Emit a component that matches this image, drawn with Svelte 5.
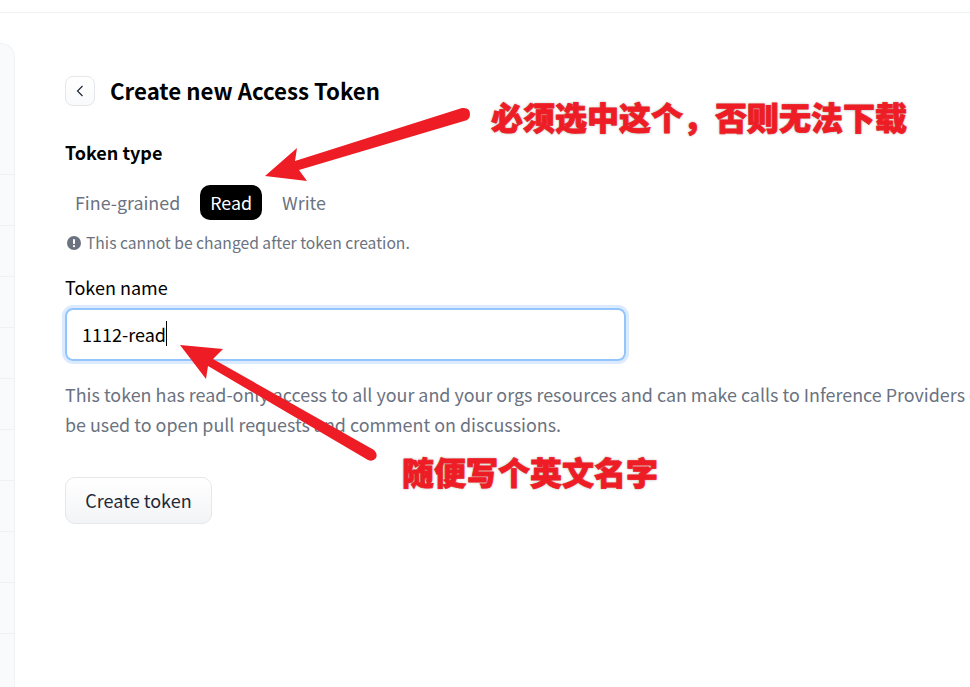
<script>
	let tokenTypes = ['Fine-grained', 'Read', 'Write'];
	let selected = 'Read';
	let rows = Array.from({ length: 10 });
</script>

<div class="page">
	<div class="topbar"></div>
	<div class="layout">
		<aside class="sidebar">
			<div class="sidebar-head"></div>
			{#each rows as _}
				<div class="sidebar-row"></div>
			{/each}
		</aside>
		<main class="main">
			<div class="title-row">
				<button class="back" aria-label="Back">
					<svg width="12" height="14" viewBox="0 0 12 14" fill="none">
						<path d="M8.5 2 3.5 7l5 5" stroke="#1f2937" stroke-width="1.2" />
					</svg>
				</button>
				<h1>Create new Access Token</h1>
			</div>

			<div class="label strong">Token type</div>
			<div class="tabs">
				{#each tokenTypes as t}
					<span class="tab" class:active={t === selected}>{t}</span>
				{/each}
			</div>
			<div class="note">
				<svg width="14" height="14" viewBox="0 0 14 14">
					<circle cx="7" cy="7" r="7" fill="#6b7280" />
					<rect x="6" y="3" width="2" height="5" rx="0.8" fill="#fff" />
					<circle cx="7" cy="10.2" r="1.1" fill="#fff" />
				</svg>
				<span>This cannot be changed after token creation.</span>
			</div>

			<div class="label">Token name</div>
			<div class="input">1112-read<span class="caret"></span></div>

			<p class="desc">This token has read-only access to all your and your orgs resources and can make calls to Inference Providers on your behalf. It cannot<br />be used to open pull requests and comment on discussions.</p>

			<button class="create">Create token</button>
		</main>
	</div>

	<svg class="arrows" width="970" height="687" viewBox="0 0 970 687">
		<path fill="#ee1c25" d="M265 176 297 148 295 161 462 108Q470 107 470 114 470 120 464 121L299 170 307 181Z" />
		<path fill="#ee1c25" d="M180 345 223 349 213 359 374 450Q378 454 376 458 373 462 368 460L208 366 206 379Z" />
	</svg>
	<div class="callout one">必须选中这个，否则无法下载</div>
	<div class="callout two">随便写个英文名字</div>
</div>

<style>
	:global(body) {
		margin: 0;
		background: #fff;
	}

	.page {
		position: relative;
		width: 970px;
		height: 687px;
		overflow: hidden;
		font-family: "Noto Sans CJK SC", "Noto Sans", sans-serif;
		background: #fff;
	}

	.topbar {
		height: 12px;
		border-bottom: 1px solid #f0f1f3;
	}

	.layout {
		display: flex;
	}

	/* sidebar is cut off at the left edge of the shot */
	.sidebar {
		width: 14px;
		height: 644px;
		margin-top: 30px;
		flex-shrink: 0;
		background: #f9fafb;
		border-right: 1px solid #f1f2f4;
		border-top: 1px solid #f1f2f4;
		border-top-right-radius: 14px;
	}

	.sidebar-head {
		height: 130px;
	}

	.sidebar-row {
		height: 50px;
		border-top: 1px solid #f0f1f3;
	}

	.main {
		padding: 63px 0 0 50px;
		flex: 1;
		min-width: 0;
	}

	.title-row {
		display: flex;
		align-items: center;
		gap: 15px;
		height: 30px;
	}

	.back {
		width: 30px;
		height: 30px;
		padding: 0;
		display: flex;
		align-items: center;
		justify-content: center;
		border: 1px solid #e5e7eb;
		border-radius: 8px;
		background: linear-gradient(#fff, #f9fafb);
	}

	h1 {
		margin: 0;
		padding-bottom: 2px;
		font-size: 22.25px;
		line-height: 28px;
		font-weight: 700;
		color: #000;
	}

	.label {
		font-size: 18px;
		line-height: 24px;
		color: #000;
		margin-top: 34px;
	}

	.label.strong {
		font-weight: 600;
	}

	.tabs {
		display: flex;
		gap: 0;
		margin-top: 21px;
	}

	.tab {
		padding: 0 10px;
		height: 35px;
		line-height: 35px;
		font-size: 17.85px;
		color: #6b7280;
		border-radius: 10px;
	}

	.tab.active {
		background: #000;
		color: #fff;
		margin: 0 10px;
	}

	.note {
		display: flex;
		align-items: center;
		gap: 5px;
		margin-top: 12px;
		margin-left: 2px;
		font-size: 15.65px;
		line-height: 22px;
		color: #6b7280;
	}

	.note + .label {
		margin-top: 21px;
	}

	.input {
		display: flex;
		align-items: center;
		box-sizing: border-box;
		width: 561px;
		height: 53px;
		margin-top: 9px;
		padding: 0 0 2px 15px;
		border: 2px solid #93c5fd;
		border-radius: 8px;
		box-shadow: 0 0 0 3px #dbeafe;
		font-size: 18px;
		color: #000;
	}

	.caret {
		width: 1px;
		height: 25px;
		background: #000;
	}

	.desc {
		margin: 18px 0 0;
		font-size: 17.9px;
		line-height: 30px;
		color: #6b7280;
		white-space: nowrap;
	}

	.create {
		display: block;
		margin-top: 38px;
		width: 147px;
		height: 47px;
		padding: 0 0 2px;
		font-family: inherit;
		font-size: 18px;
		color: #1f2937;
		border: 1px solid #e5e7eb;
		border-radius: 10px;
		background: linear-gradient(#fff, #f3f4f6);
	}

	.arrows {
		position: absolute;
		left: 0;
		top: 0;
		pointer-events: none;
	}

	.callout {
		position: absolute;
		font-size: 32px;
		line-height: 40px;
		font-weight: 900;
		color: #ee1c25;
		white-space: nowrap;
		-webkit-text-stroke: 0.8px #ee1c25;
		text-shadow: 0 0 3px rgba(170, 170, 170, 0.9), 0 0 2px rgba(200, 200, 200, 0.9);
	}

	.callout.one {
		left: 491px;
		top: 96px;
	}

	.callout.two {
		left: 402px;
		top: 451px;
	}
</style>
